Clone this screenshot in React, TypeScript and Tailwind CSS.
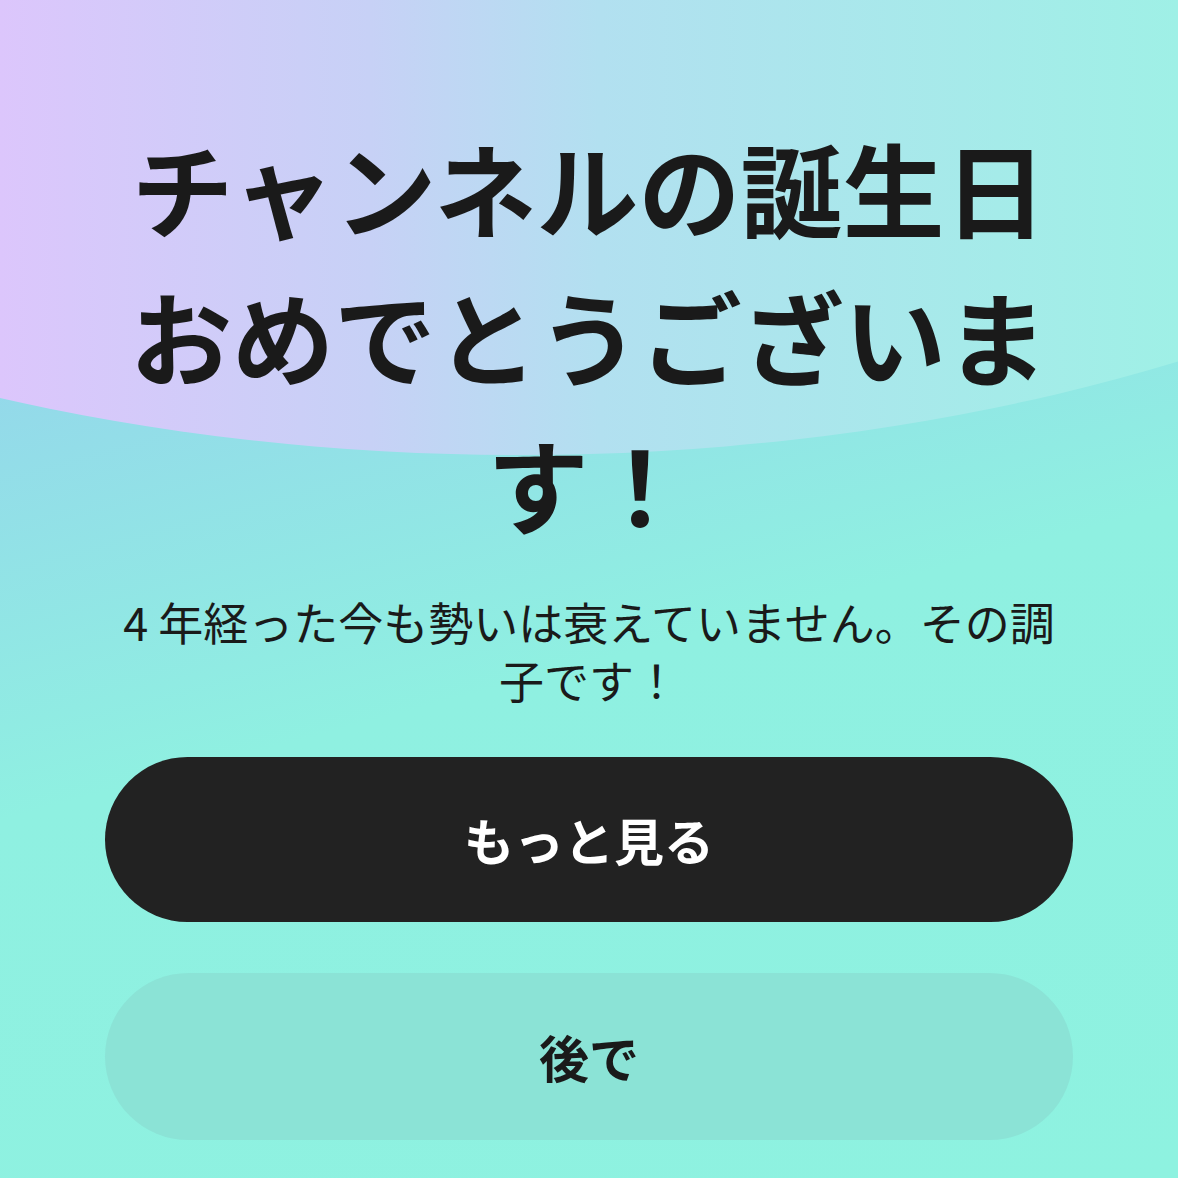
import React from 'react';

const jpFont = "font-['Noto_Sans_CJK_JP','Noto_Sans',sans-serif]";

export default function App() {
    return (
        <div className={`relative w-full h-[1178px] overflow-hidden bg-[linear-gradient(165deg,#94d8ea_25%,#8ff0e1_55%,#8ef2e0_100%)] ${jpFont}`}>
            {/* top wash: big tilted ellipse */}
            <div className="absolute left-[-880px] top-[-1137px] w-[2800px] h-[1592px] rounded-[50%] bg-[linear-gradient(90deg,#dcc6fc_880px,#c7d1f6_1250px,#b2e0f0_1480px,#9ff0e6_2058px)]" />

            <div className="relative flex flex-col items-center px-[105px] pt-[113px]">
                <h1 className="w-full text-center text-[102px] leading-[148px] font-bold text-[#1a1a1a]">
                    チャンネルの誕生日おめでとうございます！
                </h1>
                <p className="w-full mt-[36px] text-center text-[45px] leading-[58px] text-[#1a1a1a]">
                    4 年経った今も勢いは衰えていません。その調子です！
                </p>

                <div className="w-full mt-[48px] flex flex-col gap-[51px]">
                    <button className="w-full h-[165px] rounded-full bg-[#222222] text-white text-[50px] font-bold">
                        もっと見る
                    </button>
                    <button className="w-full h-[167px] rounded-full bg-[#8be3d6] text-[#1a1a1a] text-[50px] font-bold">
                        後で
                    </button>
                </div>
            </div>
        </div>
    );
}
